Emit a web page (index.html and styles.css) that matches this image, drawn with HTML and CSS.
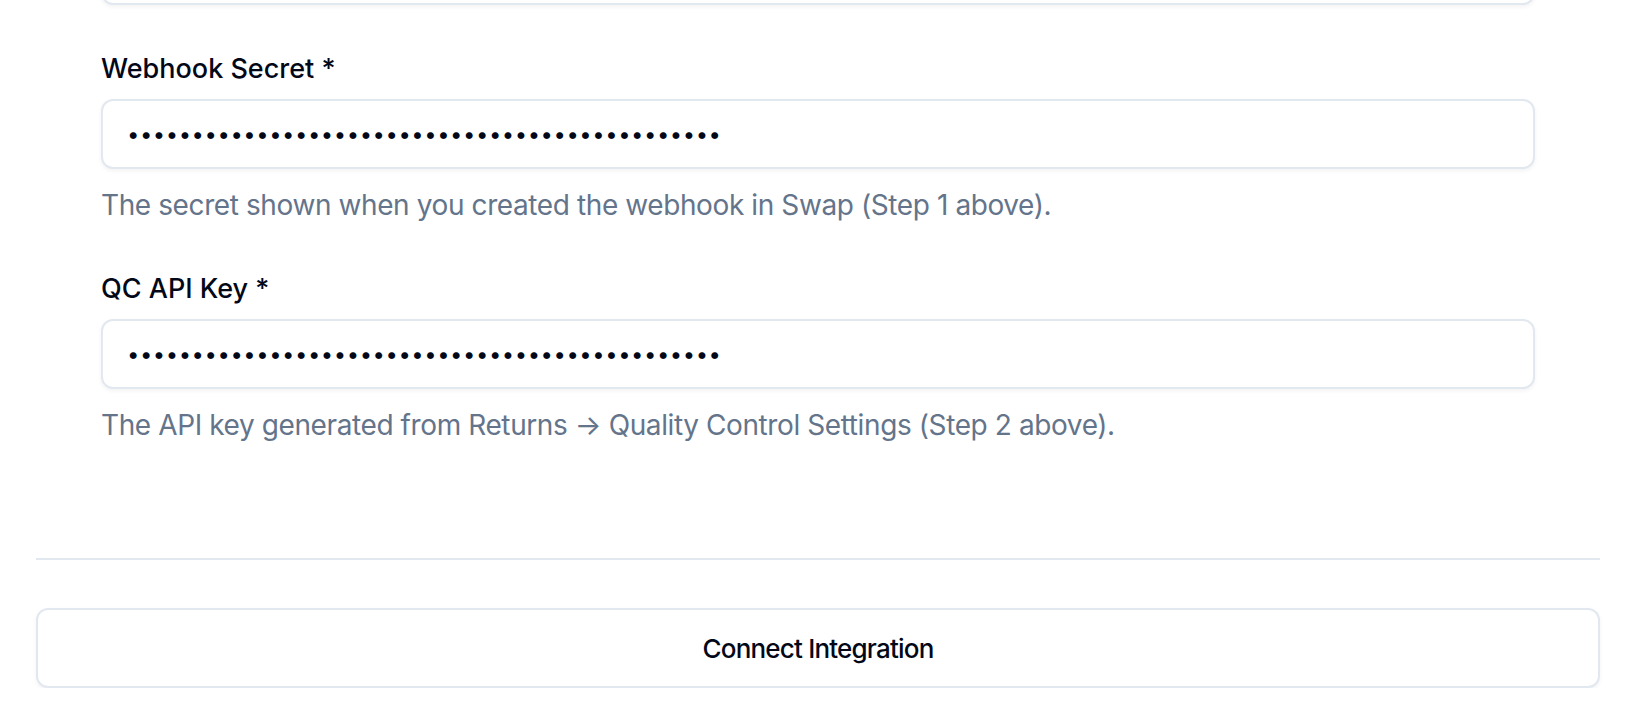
FILE: index.html
```html
<!DOCTYPE html>
<html lang="en">
<head>
<meta charset="utf-8">
<title>Connect Integration</title>
<link rel="stylesheet" href="styles.css">
</head>
<body>
<div class="panel">
  <form class="form">
    <div class="field field-prev">
      <input class="input" type="text" value="" aria-label="Previous field">
    </div>
    <div class="field">
      <label class="label" for="secret">Webhook Secret *</label>
      <input class="input" id="secret" type="password" value="abcdefghijklmnopqrstuvwxyzabcdefghijklmnopqrst">
      <p class="hint">The secret shown when you created the webhook in Swap (Step 1 above).</p>
    </div>
    <div class="field">
      <label class="label" for="apikey">QC API Key *</label>
      <input class="input" id="apikey" type="password" value="abcdefghijklmnopqrstuvwxyzabcdefghijklmnopqrst">
      <p class="hint">The API key generated from Returns → Quality Control Settings (Step 2 above).</p>
    </div>
  </form>
  <div class="footer">
    <button class="btn" type="button">Connect Integration</button>
  </div>
</div>
</body>
</html>
```
FILE: styles.css
```css
* { box-sizing: border-box; }
html, body { margin: 0; padding: 0; background: #ffffff; }
body {
  font-family: Inter, "Noto Sans", "Liberation Sans", sans-serif;
  color: #0f172a;
  overflow: hidden;
}
.panel {
  width: 1564px;
  margin-left: 36px;
}
.form {
  display: flex;
  flex-direction: column;
  gap: 46px;
  padding: 0 65px 113px;
}
.field {
  display: flex;
  flex-direction: column;
}
.field-prev {
  margin-top: -65px;
}
.label {
  font-size: 27px;
  font-weight: 500;
  line-height: 36px;
  margin-bottom: 12px;
  color: #020817;
}
.input {
  display: block;
  width: 100%;
  height: 70px;
  border: 2px solid #e2e8f0;
  border-radius: 12px;
  background: #fff;
  box-shadow: 0 2px 4px rgba(15, 23, 42, 0.05);
  padding: 0 24px;
  font-family: Inter, "Noto Sans", sans-serif;
  font-size: 22px;
  letter-spacing: 0.55px;
  color: #020817;
  outline: none;
}
.hint {
  margin: 16px 0 0;
  font-size: 28px;
  line-height: 40px;
  letter-spacing: -0.4px;
  color: #64748b;
}
.footer {
  border-top: 2px solid #e2e8f0;
  padding-top: 48px;
}
.btn {
  display: flex;
  align-items: center;
  justify-content: center;
  width: 100%;
  height: 80px;
  border: 2px solid #e2e8f0;
  border-radius: 12px;
  background: #fff;
  box-shadow: 0 2px 4px rgba(15, 23, 42, 0.05);
  font-family: Inter, "Noto Sans", sans-serif;
  font-size: 26px;
  font-weight: 500;
  letter-spacing: -0.8px;
  color: #020817;
  cursor: pointer;
}
```
